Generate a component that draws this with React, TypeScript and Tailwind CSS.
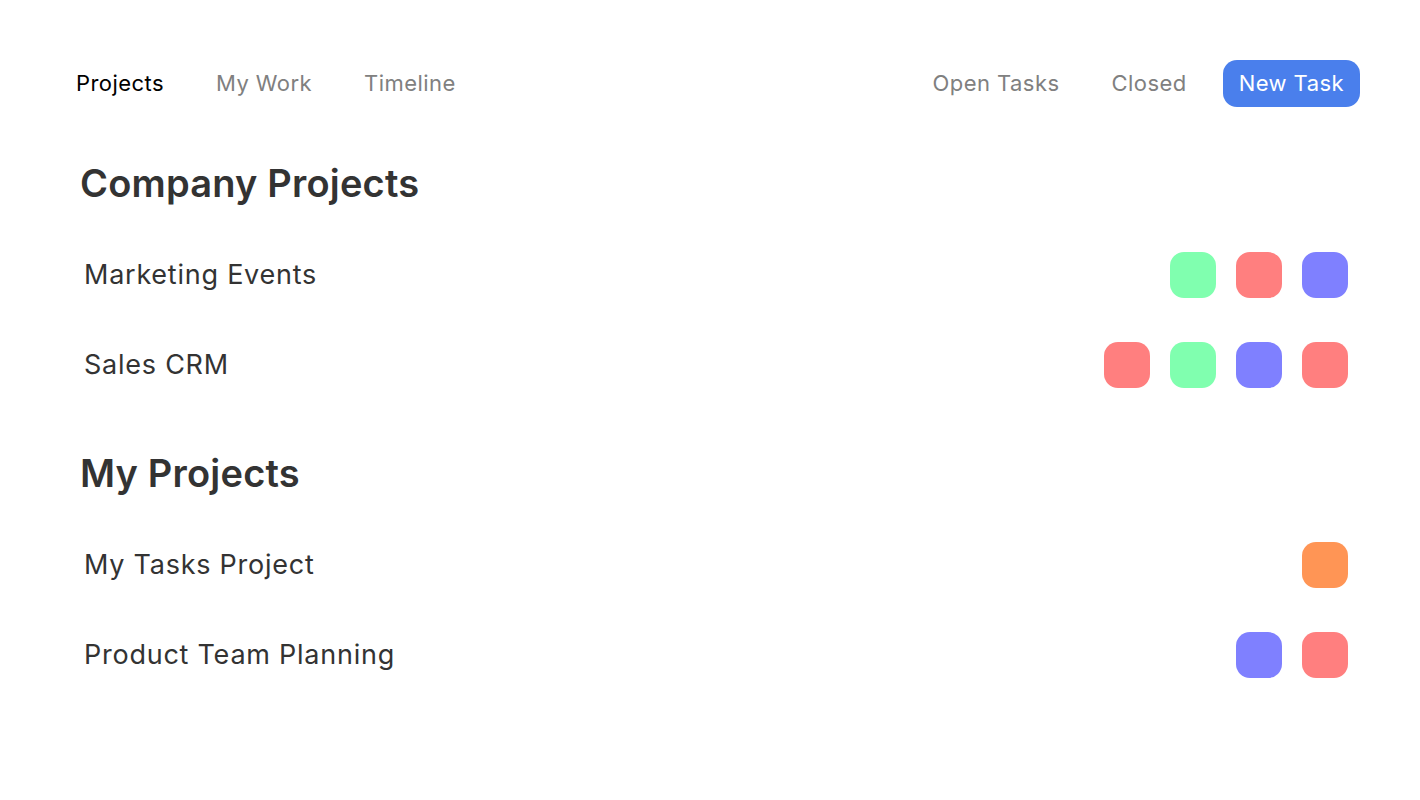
const projectGroups = [
    {
        title: "Company Projects",
        items: [
            { name: "Marketing Events", tags: ["green", "red", "blue"] },
            { name: "Sales CRM", tags: ["red", "green", "blue", "red"] },
        ],
    },
    {
        title: "My Projects",
        items: [
            { name: "My Tasks Project", tags: ["orange"] },
            { name: "Product Team Planning", tags: ["blue", "red"] },
        ],
    },
];

const tagColors: Record<string, string> = {
    green: "bg-[#80ffaf]",
    red: "bg-[#ff7f7f]",
    blue: "bg-[#7f80ff]",
    orange: "bg-[#ff9555]",
};

function NavLink({ label, active }: { label: string; active?: boolean }) {
    return (
        <a
            href="#"
            className={`px-4 h-[47px] flex items-center text-[22px] tracking-[0.02em] ${
                active ? "text-black" : "text-[#808080]"
            }`}
        >
            {label}
        </a>
    );
}

export default function App() {
    return (
        <div
            className="min-h-screen bg-white px-[60px] pt-[60px]"
            style={{ fontFamily: "Inter, 'Noto Sans', sans-serif" }}
        >
            {/* Top nav */}
            <nav className="flex items-center justify-between">
                <div className="flex items-center gap-5">
                    <NavLink label="Projects" active />
                    <NavLink label="My Work" />
                    <NavLink label="Timeline" />
                </div>
                <div className="flex items-center gap-5">
                    <NavLink label="Open Tasks" />
                    <NavLink label="Closed" />
                    <button className="h-[47px] px-4 rounded-[14px] bg-[#4a7fec] text-white text-[22px] tracking-[0.02em]">
                        New Task
                    </button>
                </div>
            </nav>

            {/* Project groups */}
            <div className="mt-[54px] flex flex-col gap-[41px]">
                {projectGroups.map((group) => (
                    <section key={group.title}>
                        <h2 className="pl-5 text-[38px] leading-[44px] tracking-[0.005em] font-semibold text-[#333333]">
                            {group.title}
                        </h2>
                        <ul className="mt-[25px]">
                            {group.items.map((item) => (
                                <li
                                    key={item.name}
                                    className="h-[90px] flex items-center justify-between pl-6 pr-3"
                                >
                                    <span className="text-[27px] tracking-[0.028em] text-[#333333]">
                                        {item.name}
                                    </span>
                                    <div className="flex gap-5">
                                        {item.tags.map((tag, i) => (
                                            <span
                                                key={i}
                                                className={`w-[46px] h-[46px] rounded-[14px] ${tagColors[tag]}`}
                                            />
                                        ))}
                                    </div>
                                </li>
                            ))}
                        </ul>
                    </section>
                ))}
            </div>
        </div>
    );
}
